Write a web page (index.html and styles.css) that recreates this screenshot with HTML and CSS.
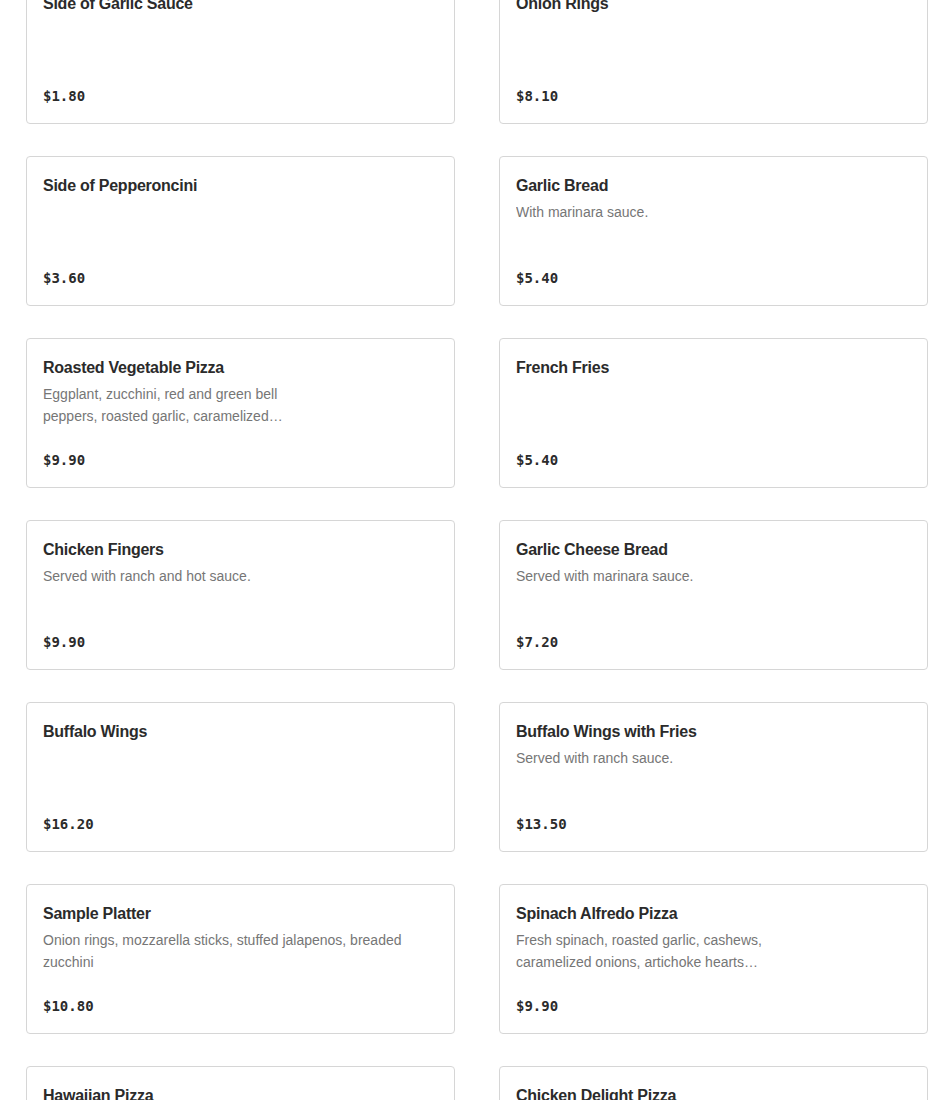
FILE: index.html
```html
<!DOCTYPE html>
<html lang="en">
<head>
<meta charset="utf-8">
<title>Menu</title>
<link rel="stylesheet" href="styles.css">
</head>
<body>
<main class="menu">
  <div class="grid">
    <article class="card"><div class="info"><h3 class="name">Side of Garlic Sauce</h3></div><div class="price">$1.80</div></article>
    <article class="card"><div class="info"><h3 class="name">Onion Rings</h3></div><div class="price">$8.10</div></article>

    <article class="card"><div class="info"><h3 class="name">Side of Pepperoncini</h3></div><div class="price">$3.60</div></article>
    <article class="card"><div class="info"><h3 class="name">Garlic Bread</h3><p class="desc">With marinara sauce.</p></div><div class="price">$5.40</div></article>

    <article class="card with-image"><div class="info"><h3 class="name">Roasted Vegetable Pizza</h3><p class="desc">Eggplant, zucchini, red and green bell peppers, roasted garlic, caramelized onions, mozzarella and tomato sauce.</p></div><div class="price">$9.90</div></article>
    <article class="card"><div class="info"><h3 class="name">French Fries</h3></div><div class="price">$5.40</div></article>

    <article class="card"><div class="info"><h3 class="name">Chicken Fingers</h3><p class="desc">Served with ranch and hot sauce.</p></div><div class="price">$9.90</div></article>
    <article class="card"><div class="info"><h3 class="name">Garlic Cheese Bread</h3><p class="desc">Served with marinara sauce.</p></div><div class="price">$7.20</div></article>

    <article class="card"><div class="info"><h3 class="name">Buffalo Wings</h3></div><div class="price">$16.20</div></article>
    <article class="card"><div class="info"><h3 class="name">Buffalo Wings with Fries</h3><p class="desc">Served with ranch sauce.</p></div><div class="price">$13.50</div></article>

    <article class="card"><div class="info"><h3 class="name">Sample Platter</h3><p class="desc">Onion rings, mozzarella sticks, stuffed jalapenos, breaded zucchini</p></div><div class="price">$10.80</div></article>
    <article class="card with-image"><div class="info"><h3 class="name">Spinach Alfredo Pizza</h3><p class="desc">Fresh spinach, roasted garlic, cashews, caramelized onions, artichoke hearts and mozzarella cheese.</p></div><div class="price">$9.90</div></article>

    <article class="card with-image"><div class="info"><h3 class="name">Hawaiian Pizza</h3><p class="desc">Ham, pineapple and mozzarella cheese.</p></div><div class="price">$9.90</div></article>
    <article class="card with-image"><div class="info"><h3 class="name">Chicken Delight Pizza</h3><p class="desc">Grilled chicken, red onions, tomatoes and mozzarella cheese.</p></div><div class="price">$9.90</div></article>
  </div>
</main>
</body>
</html>
```

FILE: styles.css
```css
html, body {
  margin: 0;
  padding: 0;
  background: #ffffff;
}

body {
  font-family: "Liberation Sans", Arial, sans-serif;
  color: #2b2b2b;
  overflow: hidden;
}

.menu {
  padding: 0 22px 0 26px;
  margin-top: -26px;
}

.grid {
  display: grid;
  grid-template-columns: 429px 429px;
  column-gap: 44px;
  row-gap: 32px;
}

.card {
  box-sizing: border-box;
  height: 150px;
  border: 1px solid #d6d6d6;
  border-radius: 4px;
  padding: 17px 16px 17px;
  display: flex;
  flex-direction: column;
  background: #fff;
}

.info {
  flex: 1 1 auto;
  min-height: 0;
}

.with-image .info {
  padding-right: 145px;
}

.name {
  margin: 0;
  font-size: 16px;
  line-height: 24px;
  font-weight: 600;
  letter-spacing: -0.25px;
  color: #2b2b2b;
}

.desc {
  margin: 3px 0 0;
  font-size: 14px;
  line-height: 22px;
  color: #767676;
  display: -webkit-box;
  -webkit-box-orient: vertical;
  -webkit-line-clamp: 2;
  overflow: hidden;
}

.price {
  font-family: "DejaVu Sans Mono", "Liberation Mono", monospace;
  font-size: 14px;
  line-height: 20px;
  font-weight: 700;
  color: #2b2b2b;
}
```
